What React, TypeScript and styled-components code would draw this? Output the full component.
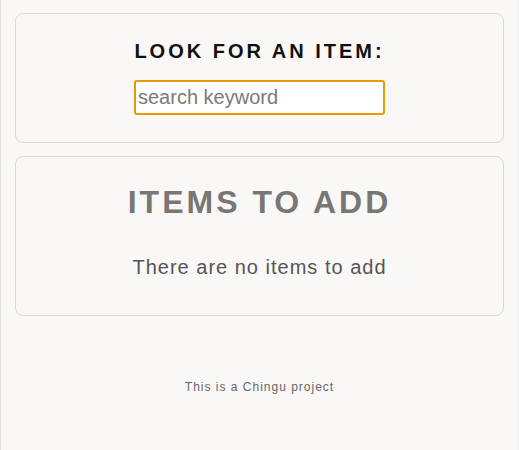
import styled, { createGlobalStyle } from "styled-components";

const GlobalStyle = createGlobalStyle`
  html, body {
    margin: 0;
    padding: 0;
    background-color: #faf8f7;
  }
  body {
    font-family: "Liberation Sans", Arial, sans-serif;
  }
`;

const Page = styled.div`
  min-height: 450px;
  box-sizing: border-box;
  border-left: 1px solid #dedede;
  border-right: 1px solid #eeeeee;
  padding: 13px 14px;
  display: flex;
  flex-direction: column;
  gap: 13px;
`;

const Card = styled.section<{ $pad: string }>`
  border: 1px solid #d9d9d9;
  border-radius: 8px;
  background-color: #faf8f7;
  padding: ${(props) => props.$pad};
  display: flex;
  flex-direction: column;
  align-items: center;
`;

const SearchTitle = styled.h2`
  margin: 0 0 17px;
  font-size: 20px;
  line-height: 23px;
  font-weight: 700;
  letter-spacing: 3px;
  color: #111;
`;

const SearchInput = styled.input`
  box-sizing: border-box;
  width: 251px;
  height: 35px;
  padding: 0 2px;
  border: 2px solid #e69b05;
  border-radius: 3px;
  background: #fff;
  font-family: "Liberation Sans", Arial, sans-serif;
  font-size: 20px;
  color: #333;
  outline: none;
  &::placeholder {
    color: #7a7a7a;
  }
`;

const ListTitle = styled.h1`
  margin: 0 0 35px;
  font-size: 32px;
  line-height: 37px;
  font-weight: 700;
  letter-spacing: 3px;
  color: #787774;
`;

const EmptyText = styled.p`
  margin: 0;
  font-size: 20px;
  line-height: 23px;
  letter-spacing: 1px;
  color: #555;
`;

const Footer = styled.footer`
  margin-top: 51px;
  text-align: center;
  font-size: 12px;
  line-height: 14px;
  letter-spacing: 1px;
  color: #666;
`;

export default function App() {
  return (
    <>
      <GlobalStyle />
      <Page>
        <Card $pad="26px 14px 27px">
          <SearchTitle>LOOK FOR AN ITEM:</SearchTitle>
          <SearchInput type="text" placeholder="search keyword" autoFocus />
        </Card>
        <Card $pad="27px 14px 36px">
          <ListTitle>ITEMS TO ADD</ListTitle>
          <EmptyText>There are no items to add</EmptyText>
        </Card>
        <Footer>This is a Chingu project</Footer>
      </Page>
    </>
  );
}
